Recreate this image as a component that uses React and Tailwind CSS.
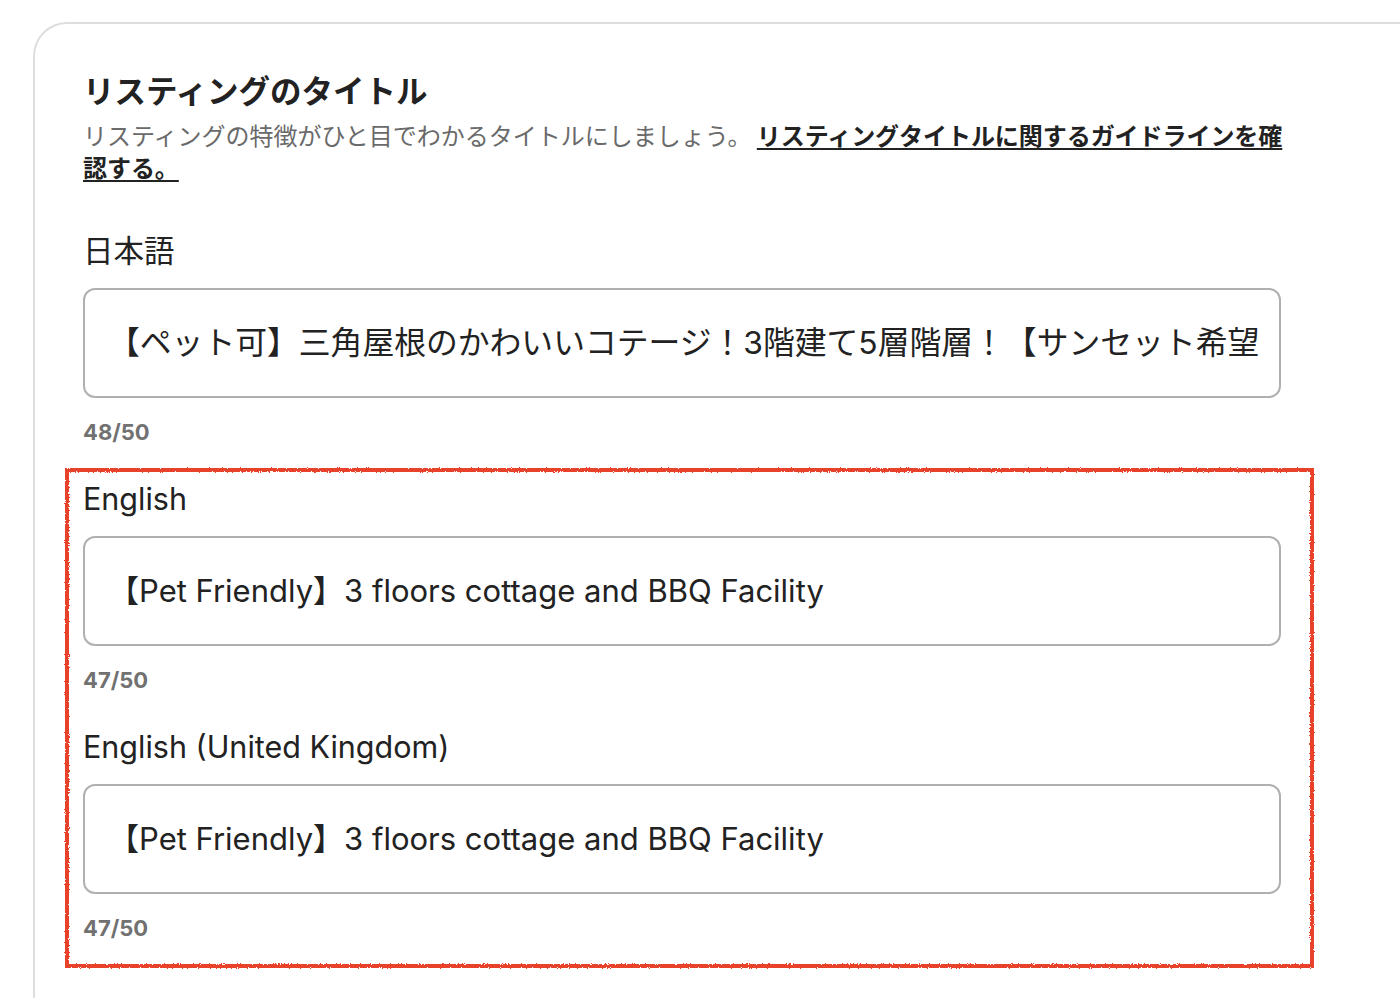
import React from "react";

const fields = [
  {
    label: "日本語",
    value: "【ペット可】三角屋根のかわいいコテージ！3階建て5層階層！【サンセット希望が丘】",
    count: "48/50",
    cjk: true,
  },
  {
    label: "English",
    value: "【Pet Friendly】3 floors cottage and BBQ Facility",
    count: "47/50",
  },
  {
    label: "English (United Kingdom)",
    value: "【Pet Friendly】3 floors cottage and BBQ Facility",
    count: "47/50",
  },
];

const font = { fontFamily: '"Inter", "Noto Sans CJK JP", sans-serif' };
const jp = { fontFamily: '"Noto Sans CJK JP", sans-serif' };

function TitleField({ label, value, count, first, cjk }) {
  return (
    <div className={first ? "mt-[48px]" : "mt-[33px]"}>
      <div className="text-[30.5px] leading-[40px] text-[#222222]">{label}</div>
      <div className="mt-[17px] h-[110px] w-[1198px] rounded-[12px] border-2 border-[#b0b0b0] flex items-center pl-[23px] pr-[20px] overflow-hidden">
        <div
          className={
            cjk
              ? "text-[31.8px] leading-[40px] text-[#222222] whitespace-nowrap overflow-hidden"
              : "text-[31px] leading-[40px] text-[#222222] whitespace-nowrap overflow-hidden"
          }
        >
          {value}
        </div>
      </div>
      <div className="mt-[20px] text-[22px] leading-[28px] font-bold text-[#717171]">{count}</div>
    </div>
  );
}

export default function App() {
  return (
    <div className="relative w-[1400px] h-[998px] overflow-hidden bg-white" style={font}>
      <div className="ml-[33px] mt-[22px] w-[1420px] h-[1000px] rounded-tl-[34px] border-l-2 border-t-2 border-[#dddddd] pl-[48px] pt-[45px]">
        <h1 className="text-[31.5px] leading-[40px] font-bold text-[#222222]" style={jp}>
          リスティングのタイトル
        </h1>
        <p className="mt-[10px] w-[1215px] text-[24px] leading-[32px] text-[#6a6a6a]" style={jp}>
          リスティングの特徴がひと目でわかるタイトルにしましょう。{" "}
          <a
            href="#"
            className="font-bold text-[#222222] underline underline-offset-[3px] decoration-2 tracking-[-0.05px]"
          >
            リスティングタイトルに関するガイドラインを確認する。
          </a>
        </p>
        {fields.map((f, i) => (
          <TitleField key={f.label} {...f} first={i === 0} />
        ))}
      </div>

      {/* red annotation box, hand-drawn look */}
      <svg width="0" height="0" className="absolute">
        <filter id="rough">
          <feTurbulence type="fractalNoise" baseFrequency="0.9" numOctaves="2" result="noise" />
          <feDisplacementMap in="SourceGraphic" in2="noise" scale="3" />
        </filter>
      </svg>
      <div
        className="absolute left-[65px] top-[468px] w-[1249px] h-[500px] border-[4px] border-[#e8432b] pointer-events-none"
        style={{ filter: "url(#rough)" }}
      />
    </div>
  );
}
